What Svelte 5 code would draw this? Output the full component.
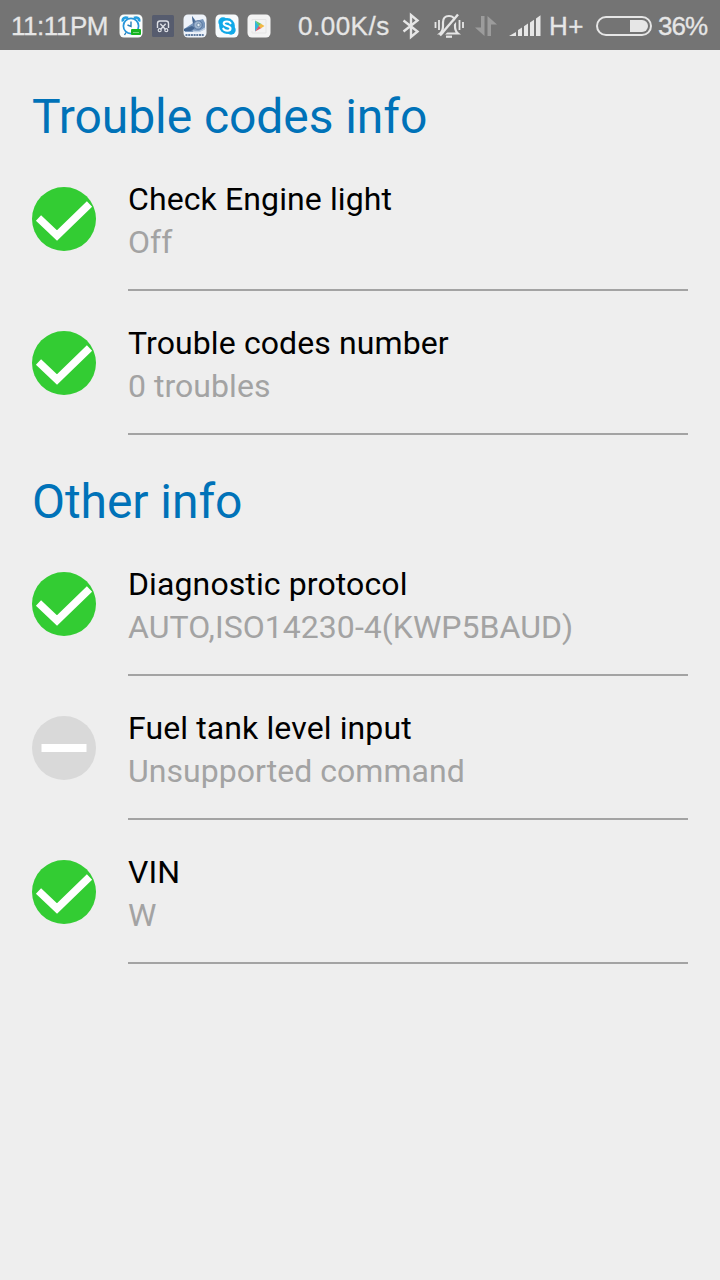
<script lang="ts">
  type Item = { title: string; value: string; ok: boolean };
  const sections: { heading: string; items: Item[] }[] = [
    {
      heading: 'Trouble codes info',
      items: [
        { title: 'Check Engine light', value: 'Off', ok: true },
        { title: 'Trouble codes number', value: '0 troubles', ok: true }
      ]
    },
    {
      heading: 'Other info',
      items: [
        { title: 'Diagnostic protocol', value: 'AUTO,ISO14230-4(KWP5BAUD)', ok: true },
        { title: 'Fuel tank level input', value: 'Unsupported command', ok: false },
        { title: 'VIN', value: 'W', ok: true }
      ]
    }
  ];
</script>

<div class="screen">
  <header class="status">
    <span class="time">11:11PM</span>
    <div class="apps">
      <svg viewBox="0 0 24 24">
        <rect x=".5" y=".5" width="23" height="23" rx="4.500" fill="#fbfdfc" />
        <path d="M4 7.500C3 4.500 6 2.500 9 4M20 7.500C21 4.500 18 2.500 15 4" fill="none" stroke="#249ee0" stroke-width="2.600" />
        <circle cx="12" cy="12" r="7.600" fill="#fff" stroke="#2695da" stroke-width="1.700" />
        <path d="M12 7.500V12.500L8.500 11M7 18.500L5.500 21" fill="none" stroke="#267fb9" stroke-width="1.400" />
        <rect x="12" y="15" width="10" height="6" rx="1" fill="#16b51f" />
        <path d="M14 18.500h6" stroke="#75d678" stroke-width="1" />
      </svg>
      <svg viewBox="0 0 24 24">
        <rect x="1" y="1" width="22" height="22" rx="1.500" fill="#565c6e" />
        <path d="M6.500 14V9.500Q6.500 7 9 7H15Q17.500 7 17.500 9.500V14M9.300 9.800L14.500 15.500M14.700 9.800L9.500 15.500" fill="none" stroke="#dde0e6" stroke-width="1.400" />
        <circle cx="8.700" cy="16.200" r="1.500" fill="none" stroke="#dde0e6" stroke-width="1.200" />
        <circle cx="15.300" cy="16.200" r="1.500" fill="none" stroke="#dde0e6" stroke-width="1.200" />
      </svg>
      <svg viewBox="0 0 24 24">
        <rect x=".5" y=".5" width="23" height="23" rx="4.500" fill="#eef3fa" />
        <path d="M1 15L10 9L9 2L13 7L20 5L22 9V15L16 18H2Z" fill="#7896bb" />
        <path d="M1 15L9 12L12 14L8 17H1ZM9 2L12 7L10 10Z" fill="#44658f" />
        <circle cx="15" cy="11" r="4.200" fill="#9eb5d0" stroke="#55749d" />
        <circle cx="15.500" cy="11" r="1.700" fill="#e3edf6" stroke="#577798" stroke-width=".7" />
        <path d="M10 17Q17 19 22 14" fill="none" stroke="#bfd0e4" stroke-width="1.500" />
        <path d="M2.500 21H21" stroke="#617da1" stroke-width="2" stroke-dasharray="2 .7" />
      </svg>
      <svg viewBox="0 0 24 24">
        <rect x=".5" y=".5" width="23" height="23" rx="4.500" fill="#f7fbfd" />
        <circle cx="12" cy="12" r="7.900" fill="#10a9e8" />
        <circle cx="8" cy="8" r="4.700" fill="#10a9e8" />
        <circle cx="16" cy="16" r="4.700" fill="#10a9e8" />
        <path d="M15.500 9.200C14.300 6.800 8.700 6.900 8.700 9.600C8.700 12.700 15.500 11.200 15.500 14.400C15.500 17.500 9.500 17.300 8.300 14.600" fill="none" stroke="#fff" stroke-width="2.100" stroke-linecap="round" />
      </svg>
      <svg viewBox="0 0 24 24">
        <rect x=".5" y=".5" width="23" height="23" rx="4.500" fill="#f3f3f3" />
        <path d="M5 7V5.500H19V19H5V17" fill="none" stroke="#e5e5e5" />
        <path d="M8 6.500V17.500L12.500 12Z" fill="#34b6dc" />
        <path d="M8 6.500L14.500 10L12 12.200Z" fill="#65c96b" />
        <path d="M8 17.500L14.500 14L12 11.800Z" fill="#e85463" />
        <path d="M14 9.700L17.500 12L14 14.300L11.800 12Z" fill="#f1b843" />
      </svg>
    </div>
    <span class="speed">0.00K/s</span>
    <svg class="bt" viewBox="0 0 20 28"><path d="M2.500 8.500L16.500 19.500L10 25V3L16.500 8.500L2.500 19.500" fill="none" stroke="#e6e6e6" stroke-width="2.400" /></svg>
    <svg class="bell" viewBox="0 0 30 26" fill="none" stroke="#e6e6e6">
      <path d="M6 20.500Q9 18 9 13V9.500Q9 3 15 3Q21 3 21 9.500V13Q21 18 24 20.500Z" stroke-width="2.200" />
      <path d="M12 23.700H18" stroke-width="2.200" />
      <path d="M9 22.500L26.500 2" stroke="#747474" stroke-width="2.200" />
      <path d="M6 22.500L24 1.500" stroke-width="2.400" />
      <path d="M1.500 9V15M5 7V17M25.500 7V17M29 9V15" stroke-width="1.800" />
    </svg>
    <svg class="data" viewBox="0 0 22 22" fill="#9c9c9c"><path d="M6 1H9.500V21L0 12.500H6ZM12.500 1L22 9.500H16V21H12.500Z" /></svg>
    <svg class="signal" viewBox="0 0 32 22" fill="#e6e6e6"><path d="M0 21L7 17V21ZM9 21V15L13 12.500V21ZM15 21V11.300L19 8.600V21ZM21 21V7.400L25 4.700V21ZM27 21V3.500L31.500 .3V21Z" /></svg>
    <span class="network">H+</span>
    <svg class="battery" viewBox="0 0 56 20"><rect x="1" y="1" width="54" height="18" rx="9" fill="none" stroke="#e6e6e6" stroke-width="2" /><path d="M34 4H46A6 6 0 0 1 46 16H34Z" fill="#e6e6e6" /></svg>
    <span class="percent">36%</span>
  </header>

  <main>
    {#each sections as section}
      <section>
        <h1>{section.heading}</h1>
        {#each section.items as item}
          <div class="row">
            <svg class="state" viewBox="0 0 64 64">
              <circle cx="32" cy="32" r="32" fill={item.ok ? '#33cc33' : '#d9d9d9'} />
              {#if item.ok}
                <path d="M6.500 31L25 48.500L57.500 17" fill="none" stroke="#fff" stroke-width="7.500" />
              {:else}
                <rect x="9.500" y="28" width="45" height="8" fill="#fff" />
              {/if}
            </svg>
            <div class="copy">
              <div class="title">{item.title}</div>
              <div class="value">{item.value}</div>
            </div>
          </div>
        {/each}
      </section>
    {/each}
  </main>
</div>

<style>
  :global(body) { margin: 0; background: #eee; }
  .screen { width: 720px; height: 1280px; overflow: hidden; background: #eee; font-family: Roboto, sans-serif; }
  svg { display: block; flex: none; }
  .status { box-sizing: border-box; height: 50px; padding: 2px 0 0 11px; display: flex; align-items: center; background: #747474; color: #e6e6e6; font: 26px/48px "Liberation Sans", sans-serif; white-space: nowrap; -webkit-text-stroke: .3px #e6e6e6; }
  .status > span { flex: none; }
  .time { width: 108px; letter-spacing: -.45px; }
  .apps { display: flex; gap: 8px; width: 179px; }
  .apps svg { width: 24px; height: 24px; }
  .speed { width: 103px; letter-spacing: .5px; }
  .bt { width: 20px; height: 28px; margin-right: 13px; }
  .bell { width: 30px; height: 26px; margin-right: 11px; }
  .data { width: 22px; height: 22px; margin-right: 12px; }
  .signal { width: 32px; height: 22px; margin-right: 8px; }
  .network { width: 47px; letter-spacing: .5px; }
  .battery { width: 56px; height: 20px; margin-right: 6px; }
  .percent { letter-spacing: -1px; }
  h1 { box-sizing: border-box; height: 97px; margin: 0; padding: 39px 32px 0; font-size: 48px; line-height: 56px; font-weight: 400; letter-spacing: -.07px; color: #0072b8; }
  .row { display: flex; height: 144px; padding: 0 32px; gap: 32px; box-sizing: border-box; }
  .state { width: 64px; height: 64px; margin-top: 40px; }
  .copy { box-sizing: border-box; flex: 1; padding-top: 33px; border-bottom: 2px solid #a3a3a3; font-size: 32px; line-height: 38px; white-space: nowrap; }
  .title { color: #000; margin-bottom: 5px; letter-spacing: .11px; }
  .value { color: #a3a3a3; letter-spacing: .04px; }
</style>
